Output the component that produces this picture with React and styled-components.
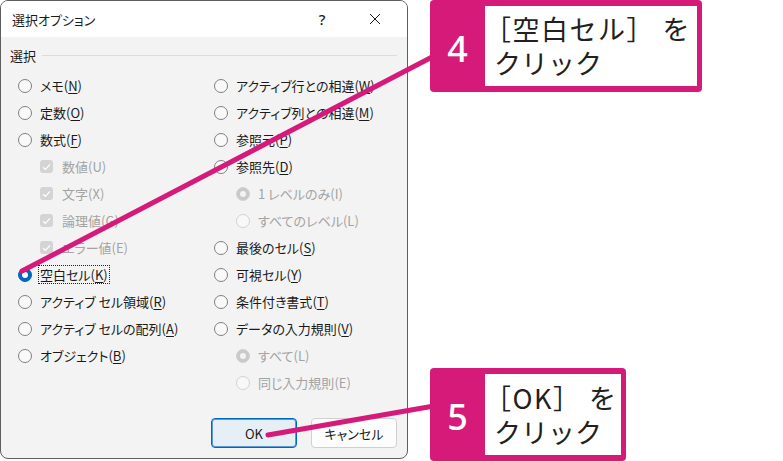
import React from 'react'
import styled, { createGlobalStyle } from 'styled-components'

const MAGENTA = '#d51a7a'

const GlobalStyle = createGlobalStyle`
  html, body {
    margin: 0;
    padding: 0;
    background: #ffffff;
  }
  body {
    font-family: 'Noto Sans CJK JP', 'Noto Sans', sans-serif;
    color: #1b1b1b;
  }
`

const Stage = styled.div`
  position: relative;
  width: 783px;
  height: 461px;
  overflow: hidden;
  display: flex;
  align-items: flex-start;
`

const Dialog = styled.div`
  width: 408px;
  height: 459px;
  box-sizing: border-box;
  border: 1px solid #5e5e5e;
  border-radius: 8px;
  overflow: hidden;
  display: flex;
  flex-direction: column;
  background: #f3f3f3;
  font-size: 13px;
  font-feature-settings: 'palt';
`

const TitleBar = styled.div`
  height: 36px;
  flex: none;
  display: flex;
  align-items: center;
  background: #ffffff;
  padding-left: 11px;
`

const Title = styled.div`
  flex: 1;
  font-size: 13px;
  color: #1b1b1b;
`

const TitleButton = styled.div`
  width: ${({ w }) => w}px;
  height: 36px;
  display: flex;
  align-items: center;
  justify-content: center;
  font-size: 15px;
  font-weight: 500;
  font-family: 'Noto Sans', sans-serif;
  color: #1b1b1b;
`

const Body = styled.div`
  flex: 1;
  display: flex;
  flex-direction: column;
  padding: 8px 10px 10px 9px;
`

const GroupHeader = styled.div`
  height: 20px;
  display: flex;
  align-items: center;
  gap: 6px;
  color: #1b1b1b;
  &::after {
    content: '';
    flex: 1;
    height: 1px;
    background: #dcdcdc;
  }
`

const Columns = styled.div`
  display: grid;
  grid-template-columns: 196px 1fr;
  margin: 7px 0 0 8px;
`

const Column = styled.div`
  display: flex;
  flex-direction: column;
`

const Row = styled.div`
  height: 27px;
  display: flex;
  align-items: center;
  gap: 6px;
  padding-left: ${({ indent }) => (indent ? 22 : 0)}px;
  color: ${({ disabled }) => (disabled ? '#a3a3a3' : '#1b1b1b')};
  white-space: nowrap;
`

const Label = styled.span`
  padding: 0 1px;
  border: 1px dotted ${({ focused }) => (focused ? '#222' : 'transparent')};
  line-height: 17px;
`

const Key = styled.span`
  text-decoration: ${({ disabled }) => (disabled ? 'none' : 'underline')};
  text-underline-offset: 2px;
`

const Radio = styled.span`
  width: 14px;
  height: 14px;
  box-sizing: border-box;
  flex: none;
  border-radius: 50%;
  border: 1px solid ${({ checked, disabled }) =>
    disabled ? '#d2d2d2' : checked ? '#0067c0' : '#808080'};
  background: ${({ checked, disabled }) =>
    checked ? (disabled ? '#c9c9c9' : '#0067c0') : disabled ? '#f8f8f8' : '#f9f9f9'};
  display: flex;
  align-items: center;
  justify-content: center;
  &::after {
    content: '';
    display: ${({ checked }) => (checked ? 'block' : 'none')};
    width: 6px;
    height: 6px;
    border-radius: 50%;
    background: ${({ disabled }) => (disabled ? '#f3f3f3' : '#ffffff')};
  }
`

const Check = styled.span`
  width: 13px;
  height: 13px;
  flex: none;
  border-radius: 3px;
  background: #d4d4d4;
  display: flex;
  align-items: center;
  justify-content: center;
  margin-right: 1px;
`

const ButtonRow = styled.div`
  margin-top: auto;
  display: flex;
  justify-content: flex-end;
  gap: 14px;
`

const Button = styled.button`
  width: 86px;
  height: 30px;
  border-radius: 4px;
  font-family: inherit;
  font-size: 13px;
  font-feature-settings: 'palt';
  color: #1b1b1b;
  border: 1px solid ${({ primary }) => (primary ? '#0067c0' : '#d0d0d0')};
  box-shadow: ${({ primary }) => (primary ? 'inset 0 0 0 1px #5a9ad6' : 'none')};
  background: ${({ primary }) => (primary ? '#e6eef6' : '#fdfdfd')};
  padding: 0;
`

const Leaders = styled.svg`
  position: absolute;
  inset: 0;
  pointer-events: none;
`

const Callout = styled.div`
  position: absolute;
  left: ${({ x }) => x}px;
  top: ${({ y }) => y}px;
  width: ${({ w }) => w}px;
  height: ${({ h }) => h}px;
  box-sizing: border-box;
  background: ${MAGENTA};
  border-radius: 4px;
  padding: 6px 5px 6px 0;
  display: flex;
`

const Badge = styled.div`
  width: 55px;
  flex: none;
  display: flex;
  align-items: center;
  justify-content: center;
  color: #ffffff;
  font-family: 'Noto Sans', 'Open Sans', sans-serif;
  font-weight: 500;
  font-size: 36px;
  padding-top: 4px;
`

const Note = styled.div`
  flex: 1;
  background: #ffffff;
  display: flex;
  flex-direction: column;
  justify-content: center;
  padding-left: 9px;
  font-size: 27px;
  color: #231f20;
  font-weight: 400;
`

// the first line opens with a full-width bracket, pulled left to sit under the text column
const NoteLine = styled.span`
  display: block;
  height: 34px;
  line-height: 34px;
  margin-left: ${({ lead }) => (lead ? -10 : 0)}px;
  letter-spacing: ${({ lead }) => (lead ? 1.5 : 0)}px;
`

const CheckMark = () => (
  <svg width='9' height='8' viewBox='0 0 9 8'>
    <path d='M1 4.2 L3.4 6.4 L8 1.4' fill='none' stroke='#ffffff' strokeWidth='1.2' />
  </svg>
)

const CloseIcon = () => (
  <svg width='12' height='12' viewBox='0 0 12 12'>
    <path d='M1 1 L11 11 M11 1 L1 11' stroke='#1b1b1b' strokeWidth='1' />
  </svg>
)

const Option = ({ text, k, kind = 'radio', checked, disabled, indent, focused }) => (
  <Row indent={indent} disabled={disabled}>
    {kind === 'check' ? (
      <Check>
        <CheckMark />
      </Check>
    ) : (
      <Radio checked={checked} disabled={disabled} />
    )}
    <Label focused={focused}>
      {text}(<Key disabled={disabled}>{k}</Key>)
    </Label>
  </Row>
)

const leftOptions = [
  { text: 'メモ', k: 'N' },
  { text: '定数', k: 'O' },
  { text: '数式', k: 'F' },
  { text: '数値', k: 'U', kind: 'check', disabled: true, indent: true },
  { text: '文字', k: 'X', kind: 'check', disabled: true, indent: true },
  { text: '論理値', k: 'G', kind: 'check', disabled: true, indent: true },
  { text: 'エラー値', k: 'E', kind: 'check', disabled: true, indent: true },
  { text: '空白セル', k: 'K', checked: true, focused: true },
  { text: 'アクティブ セル領域', k: 'R' },
  { text: 'アクティブ セルの配列', k: 'A' },
  { text: 'オブジェクト', k: 'B' },
]

const rightOptions = [
  { text: 'アクティブ行との相違', k: 'W' },
  { text: 'アクティブ列との相違', k: 'M' },
  { text: '参照元', k: 'P' },
  { text: '参照先', k: 'D' },
  { text: '1 レベルのみ', k: 'I', checked: true, disabled: true, indent: true },
  { text: 'すべてのレベル', k: 'L', disabled: true, indent: true },
  { text: '最後のセル', k: 'S' },
  { text: '可視セル', k: 'Y' },
  { text: '条件付き書式', k: 'T' },
  { text: 'データの入力規則', k: 'V' },
  { text: 'すべて', k: 'L', checked: true, disabled: true, indent: true },
  { text: '同じ入力規則', k: 'E', disabled: true, indent: true },
]

const App = () => (
  <Stage>
    <GlobalStyle />
    <Dialog>
      <TitleBar>
        <Title>選択オプション</Title>
        <TitleButton w={42}>?</TitleButton>
        <TitleButton w={64}>
          <CloseIcon />
        </TitleButton>
      </TitleBar>
      <Body>
        <GroupHeader>選択</GroupHeader>
        <Columns>
          <Column>
            {leftOptions.map((o) => (
              <Option key={o.text} {...o} />
            ))}
          </Column>
          <Column>
            {rightOptions.map((o) => (
              <Option key={o.text} {...o} />
            ))}
          </Column>
        </Columns>
        <ButtonRow>
          <Button primary>OK</Button>
          <Button>キャンセル</Button>
        </ButtonRow>
      </Body>
    </Dialog>

    <Leaders width='783' height='461' viewBox='0 0 783 461'>
      <line x1='434' y1='56' x2='22' y2='271' stroke={MAGENTA} strokeWidth='5' strokeLinecap='round' />
      <line x1='434' y1='406' x2='268' y2='435' stroke={MAGENTA} strokeWidth='5' strokeLinecap='round' />
    </Leaders>

    <Callout x={430} y={0} w={272} h={92}>
      <Badge>4</Badge>
      <Note>
        <NoteLine lead>［空白セル］ を</NoteLine>
        <NoteLine>クリック</NoteLine>
      </Note>
    </Callout>
    <Callout x={430} y={368} w={196} h={93}>
      <Badge>5</Badge>
      <Note>
        <NoteLine lead>［OK］ を</NoteLine>
        <NoteLine>クリック</NoteLine>
      </Note>
    </Callout>
  </Stage>
)

export default App
